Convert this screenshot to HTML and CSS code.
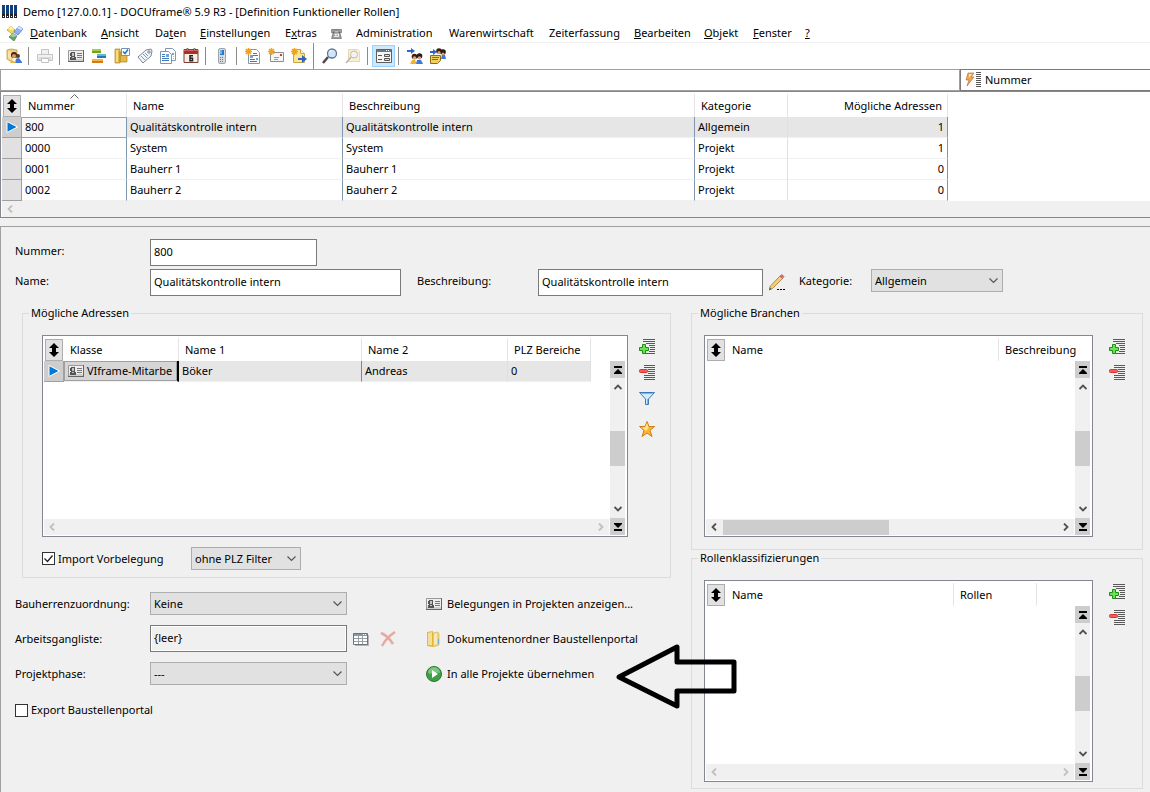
FILE: index.html
```
<!DOCTYPE html>
<html lang="de">
<head>
<meta charset="utf-8" />
<title>DOCUframe - Definition Funktioneller Rollen</title>
<link rel="stylesheet" href="styles.css">
</head>
<body>
<svg class="sprite" aria-hidden="true">
  <symbol id="i-logo" viewBox="0 0 16 16"><path fill="#123f7c" d="M0 1h3v9H0zM4 1h3v9H4zM8 1h3v9H8zM12 1h3v9h-3z"/><path fill="#222" d="M0 10h3v4H0zM4 10h3v4H4zM8 10h3v4H8zM12 10h3v4h-3z"/><path fill="#fff" d="M1 12h1v1H1zM5 12h1v1H5zM9 12h1v1H9zM13 12h1v1h-1z"/></symbol>
  <symbol id="i-cubes" viewBox="0 0 16 16"><path fill="#f1dc62" stroke="#a58a27" stroke-width=".6" d="M4 1l4 4-3 4-5-4z"/><path fill="#fff3a6" d="M4 1l3 3-3 1-3-1z"/><path fill="#8eb2f5" stroke="#3d63b3" stroke-width=".6" d="M12 1l4 3-5 6-4-3z"/><path fill="#d4e2ff" d="M12 1l4 3-2 1-4-2z"/><path fill="#6ba06a" stroke="#3c6f43" stroke-width=".6" d="M6 8l4 3-3 5-5-4z"/><path fill="#a7cda3" d="M6 8l4 3-4 1-3-1z"/></symbol>
  <symbol id="i-phone" viewBox="0 0 16 16"><path fill="#a9a29c" stroke="#5b5753" stroke-width=".8" d="M2 3h12v4h-3V5H5v2H2zM4 7h8l2 7H2z"/><path fill="#fff" d="M5 8h6v4H5z"/><path stroke="#755" stroke-dasharray="1 1" d="M5 8.500h6M5 10.500h6"/></symbol>
  <symbol id="i-user" viewBox="0 0 16 16"><path fill="#efd07c" stroke="#b98c32" stroke-width=".7" d="M1 2l4-1 6 1v11H4l-3-2z"/><path fill="#f7e4a6" d="M2 3l3 1v8l-3-2z"/><circle cx="8" cy="7" r="3" fill="#3b2418"/><circle cx="12" cy="8" r="2" fill="#5a3a28"/><circle cx="8" cy="8" r="2" fill="#dd9a6e"/><path fill="#f4f4f4" d="M5 14l2-4h3l2 4z"/><path fill="#4079dc" d="M9 15l1-4 3-1 3 4v1z"/><path fill="#e6b53b" d="M4 15l2-3 4 3z"/></symbol>
  <symbol id="i-printer" viewBox="0 0 16 16"><path fill="#f1f1f1" stroke="#c4c4c4" d="M4.500 1.500h7v5h-7zM.5 6.500h15v6H.5z"/><path fill="#dadada" d="M2 9h12v3H2z"/><path fill="#fff" stroke="#c4c4c4" d="M4.500 10.500h7v4h-7z"/></symbol>
  <symbol id="i-card" viewBox="0 0 16 16"><path fill="#ededed" stroke="#9a9a9a" d="M.5 2.500h15v11H.5z"/><path stroke="#666" d="M0 13.500h16M15.500 2v12"/><path fill="#999" d="M1 11h14v2H1z" opacity=".35"/><path fill="#555" d="M3 4h4v1H3zM2 5h2v3H2zM6 5h1v3H6zM3 8h4v1H3zM2 9h6v3H2z"/><path fill="#c4c4c4" d="M4 5h2v3H4zM4 9h2v1H4z"/><path stroke="#777" d="M9 5.500h5M9 7.500h5M9 9.500h5"/></symbol>
  <symbol id="i-gantt" viewBox="0 0 16 16"><path fill="#6fa51c" d="M1 1h9v4H1z"/><path fill="#a5cf48" d="M1 1h9v2H1z"/><path fill="#2478ae" d="M6 6h9v4H6z"/><path fill="#67b2da" d="M6 6h9v2H6z"/><path fill="#d87916" d="M1 11h11v4H1z"/><path fill="#f3b14e" d="M1 11h11v2H1z"/></symbol>
  <symbol id="i-foldercheck" viewBox="0 0 16 16"><path fill="#e5b944" stroke="#b0882a" stroke-width=".7" d="M1 1h5v14H1zM6 4h7v10H6z"/><path fill="#f6dc89" d="M2 2h2v12H2z"/><path fill="#fff" stroke="#7294ba" d="M7.500.5h8v7h-8z"/><path fill="none" stroke="#2b6fc2" stroke-width="1.500" d="M9 3.500l2 2 3-4"/></symbol>
  <symbol id="i-tag" viewBox="0 0 16 16"><path fill="#f2f6fa" stroke="#7a8796" d="M1 9l8-7 5-1 1 2-1 5-8 7z"/><circle cx="12" cy="4" r="1.200" fill="#fff" stroke="#6b7f96"/><path stroke="#7c97b7" d="M4 8l4 4M6 6l4 4M8 5l3 3"/></symbol>
  <symbol id="i-docs" viewBox="0 0 16 16"><path fill="#fff" stroke="#7e96b5" d="M5.500.5h7l3 3v9h-10z"/><path fill="#fff" stroke="#7e96b5" d="M.5 3.500h8l3 3v9H.5z"/><path stroke="#4276b8" d="M2 6.500h3M2 8.500h3M2 10.500h7M2 12.500h7"/><path fill="#6fa3d8" d="M6 6h3v3H6zM12 5h2v2h-2z"/><path stroke="#9bb" d="M13 8.500h1M13 10.500h1"/></symbol>
  <symbol id="i-calendar" viewBox="0 0 16 16"><path fill="#f5eee4" stroke="#7a3f35" d="M1 1.500h14v13H1z"/><path fill="#b52a24" d="M1 1h14v5H1z"/><path fill="#e06a5f" d="M1 2h14v1H1z"/><path fill="#ddd" stroke="#444" stroke-width=".6" d="M4 0h1v3H4zM11 0h1v3h-1z"/><path fill="none" stroke="#222" stroke-width="1.500" d="M10 7.700H7v5h2.500v-2.500H7"/></symbol>
  <symbol id="i-mobile" viewBox="0 0 16 16"><rect x="4.500" y=".5" width="7" height="15" rx="1.500" fill="#d7dade" stroke="#9fa5ad"/><path fill="#2878c8" d="M6 2h4v5H6z"/><path fill="#76b5ec" d="M6 2h2v4H6z"/><path stroke="#777" stroke-dasharray="1 1" d="M6 9.500h4M6 11.500h4M6 13.500h4"/></symbol>
  <symbol id="i-newdoc" viewBox="0 0 16 16"><path fill="#fff" stroke="#7e96b5" d="M3.500 1.500h8l3 3v11h-11z"/><path stroke="#4276b8" d="M8 5.500h4M8 7.500h5M5 11.500h5M5 13.500h7"/><path fill="#6fa3d8" d="M5 7h3v3H5zM11 10h2v2h-2z"/><path stroke="#f0a21d" stroke-width="1.500" d="M3.500 0v7M0 3.500h7M1 1l5 5M6 1L1 6"/></symbol>
  <symbol id="i-newmail" viewBox="0 0 16 16"><path fill="#f6f6f6" stroke="#8d8d8d" d="M2.500 4.500h13v9h-13z"/><path fill="#d03a2b" d="M12 6h2v2h-2z"/><path stroke="#999" d="M6 9.500h5M6 11.500h4"/><path stroke="#f0a21d" stroke-width="1.500" d="M3.500 0v7M0 3.500h7M1 1l5 5M6 1L1 6"/></symbol>
  <symbol id="i-newnote" viewBox="0 0 16 16"><path fill="#fae691" stroke="#c8a643" d="M2.500 1.500h7l4 4v9h-11z"/><path fill="#fff6cf" stroke="#c8a643" d="M9.500 1.500v4h4"/><path fill="#2d62c9" d="M7 10h4V7l5 4-5 4v-3H7z"/><path stroke="#f0a21d" stroke-width="1.500" d="M3.500 0v7M0 3.500h7M1 1l5 5M6 1L1 6"/></symbol>
  <symbol id="i-search" viewBox="0 0 16 16"><path stroke="#4b4b4b" stroke-width="2.500" d="M6 9L1 15"/><circle cx="10" cy="5.500" r="4.500" fill="#cfe6fa" stroke="#5d7893" stroke-width="1.300"/><path fill="#fff" d="M7 5c0-2 2-3 4-3-1 1-3 1-4 3z"/></symbol>
  <symbol id="i-searchdoc" viewBox="0 0 16 16"><path fill="#fbefcf" stroke="#e9d8ad" d="M3.500 1.500h9l2 2v10h-11z"/><circle cx="9" cy="6.500" r="3.500" fill="#f0f2f5" stroke="#bcbcbc"/><path stroke="#bdb5a5" stroke-width="1.500" d="M6 9l-5 6"/></symbol>
  <symbol id="i-form" viewBox="0 0 16 16"><path fill="#f7f7f7" stroke="#5f5f5f" d="M.5 1.500h15v13H.5z"/><path fill="#777" d="M1 2h14v2H1z"/><path fill="#fff" d="M10 2h1v1h-1zM12 2h1v1h-1z"/><path stroke="#555" d="M2 7.500h4M2 11.500h4"/><path fill="#f3e585" stroke="#555" d="M8.500 6.500h5v2h-5zM8.500 10.500h5v2h-5z"/></symbol>
  <symbol id="i-people" viewBox="0 0 16 16"><path fill="#2d66d0" d="M0 2h4V0l4 3-4 3V4H0z"/><circle cx="7.500" cy="8.500" r="2.800" fill="#3a2116"/><circle cx="12.500" cy="8" r="2.800" fill="#2a1a13"/><circle cx="7.500" cy="10" r="1.700" fill="#e0a07a"/><circle cx="12.500" cy="10" r="1.700" fill="#e0a07a"/><path fill="#edb536" d="M3 16l2-4h3l2 4z"/><path fill="#3e78da" d="M9 16l1-4h4l2 4z"/></symbol>
  <symbol id="i-peoplenote" viewBox="0 0 16 16"><path fill="#2d66d0" d="M0 3h3V1l4 3-4 3V5H0z"/><circle cx="9" cy="3" r="2.800" fill="#3a2116"/><circle cx="13" cy="4" r="2.800" fill="#2a1a13"/><circle cx="9" cy="4.500" r="1.500" fill="#e0a07a"/><circle cx="13" cy="6" r="1.500" fill="#e0a07a"/><path fill="#3e78da" d="M11 11l1-4h3l1 4z"/><path fill="#f0cf61" stroke="#8e6c1c" d="M.5 7.500h10v5l-3 3h-7z"/><path stroke="#8e6c1c" d="M2 9.500h7M2 11.500h6"/></symbol>
  <symbol id="i-flash" viewBox="0 0 16 16"><path fill="#f3a44c" stroke="#a4663a" stroke-width=".6" d="M3 1h6L6 5h3l-7 9 2-6H1z"/><path fill="#ffe3a8" d="M4 2h3L4 6z"/><path stroke="#555" d="M11 .5h5M11 2.500h5M11 4.500h5M11 6.500h5M11 8.500h5M11 10.500h5M11 12.500h5M11 14.500h5"/></symbol>
  <symbol id="i-updown" viewBox="0 0 10 14"><path d="M5 0l5 5H7v4h3l-5 5-5-5h3V5H0z"/></symbol>
  <symbol id="i-current" viewBox="0 0 12 12"><path fill="#0078d7" stroke="#fff" d="M1 .5L11.500 6 1 11.500z"/></symbol>
  <symbol id="i-left" viewBox="0 0 8 8"><path fill="none" stroke="currentColor" stroke-width="1.800" d="M6 .5L2.500 4 6 7.500"/></symbol>
  <symbol id="i-right" viewBox="0 0 8 8"><path fill="none" stroke="currentColor" stroke-width="1.800" d="M2 .5L5.500 4 2 7.500"/></symbol>
  <symbol id="i-up" viewBox="0 0 8 8"><path fill="none" stroke="currentColor" stroke-width="1.800" d="M.5 6L4 2.500 7.500 6"/></symbol>
  <symbol id="i-down" viewBox="0 0 8 8"><path fill="none" stroke="currentColor" stroke-width="1.800" d="M.5 2L4 5.500 7.500 2"/></symbol>
  <symbol id="i-first" viewBox="0 0 8 8"><path d="M0 0h8v2H0zM4 3l4 4v1H0V7z"/></symbol>
  <symbol id="i-last" viewBox="0 0 8 8"><path d="M0 6h8v2H0zM4 5L0 1V0h8v1z"/></symbol>
  <symbol id="i-add" viewBox="0 0 18 18"><path stroke="#5a5a5a" d="M5 1.500h12M5 3.500h12M8 5.500h9M11 7.500h6M12 9.500h5M12 11.500h5M11 13.500h6M5 15.500h12"/><path fill="#6fe04f" stroke="#169016" d="M4.500 6.500h3v3h3v3h-3v3h-3v-3h-3v-3h3z"/></symbol>
  <symbol id="i-remove" viewBox="0 0 18 18"><path stroke="#5a5a5a" d="M6 1.500h11M6 3.500h11M10 5.500h7M10 7.500h7M10 9.500h7M6 11.500h11M6 13.500h11M6 15.500h11"/><rect x="1.500" y="5.500" width="8" height="3" rx="1" fill="#f65a5a" stroke="#dc3030"/></symbol>
  <symbol id="i-filter" viewBox="0 0 18 18"><path fill="#d4ebfb" stroke="#3d79b8" d="M1.500 2.500h15l-6 6.500v5.500h-3V9z"/><path fill="#7db4e0" d="M3 3h12l-1 1H4zM9 9h1v5H9z"/></symbol>
  <symbol id="i-star" viewBox="0 0 18 18"><path fill="#fdb62a" stroke="#cf7a24" d="M9 1.500l2 5h5.500l-4.500 4 2 6-5-3.500L4 16.500l2-6-4.500-4H7z"/><path fill="#ffe98c" d="M9 3l1.500 4.500L8 11 4 7.500h3z"/></symbol>
  <symbol id="i-pencil" viewBox="0 0 18 18"><path fill="#f3ce73" stroke="#9c7434" stroke-width=".8" d="M2 12.500L12 2l2.500 2.500L4.500 14.500l-3 1.500z"/><path fill="#d9717a" stroke="#a1545c" stroke-width=".6" d="M12 2l2-1.500L16 2.500 14.500 4.500z"/><path fill="#555" d="M1 16l1-2.500L3.500 15z"/><path d="M9 15h2v1H9zM12 15h2v1h-2zM15 15h2v1h-2z"/></symbol>
  <symbol id="i-table" viewBox="0 0 16 16"><path fill="#b5b5b5" d="M2 4h14v11H2z"/><path fill="#fff" stroke="#6a737d" d="M.5 2.500h14v11H.5z"/><path fill="#8a97a5" d="M1 3h13v2H1z"/><path fill="#fff" d="M10 3h1v1h-1zM12 3h1v1h-1z"/><path stroke="#98a1aa" d="M1 7.500h13M1 10.500h13M5.500 5v8M9.500 5v8"/></symbol>
  <symbol id="i-cross" viewBox="0 0 16 16"><path fill="none" stroke="#e6aaa2" stroke-width="2.500" d="M1 2c5 2 9 6 12 11M15 1C9 5 5 9 2 15"/></symbol>
  <symbol id="i-folder" viewBox="0 0 16 16"><path fill="#e3b843" d="M1 1l6-1v16l-6-1z"/><path fill="#f5df94" d="M2 2l4-1v13H2z"/><path fill="#f0d070" stroke="#d9b34d" stroke-width=".6" d="M7 2l5-1 1 2v11l-6 2z"/><path fill="#f9e9b4" d="M8 3l3-1v11l-3 1z"/><path fill="#5bb0e6" d="M12 8h1v5h-1z"/></symbol>
  <symbol id="i-play" viewBox="0 0 16 16"><circle cx="8" cy="8" r="7.500" fill="#3fa045" stroke="#2d7432"/><path fill="#7cc77d" d="M2 7a6 6 0 0 1 12 0c-4-2-8 2-12 0z"/><path fill="#fff" d="M6 4l6 4-6 4z"/></symbol>
</svg>

<header class="titlebar">
  <svg class="icon"><use href="#i-logo"/></svg>
  <span>Demo [127.0.0.1] - DOCUframe® 5.9 R3 - [Definition Funktioneller Rollen]</span>
</header>

<nav class="menu">
  <svg class="icon"><use href="#i-cubes"/></svg>
  <a href="#"><u>D</u>atenbank</a>
  <a href="#"><u>A</u>nsicht</a>
  <a href="#">Da<u>t</u>en</a>
  <a href="#"><u>E</u>instellungen</a>
  <a href="#">E<u>x</u>tras</a>
  <a href="#" aria-label="Telefon"><svg class="icon-small"><use href="#i-phone"/></svg></a>
  <a href="#">Administration</a>
  <a href="#">Warenwirtschaft</a>
  <a href="#">Zeiterfassung</a>
  <a href="#"><u>B</u>earbeiten</a>
  <a href="#"><u>O</u>bjekt</a>
  <a href="#"><u>F</u>enster</a>
  <a href="#"><u>?</u></a>
</nav>

<div class="toolbar">
  <button aria-label="Benutzer"><svg class="icon"><use href="#i-user"/></svg></button>
  <span class="sep"></span>
  <button aria-label="Drucken" disabled><svg class="icon"><use href="#i-printer"/></svg></button>
  <span class="sep"></span>
  <button aria-label="Adressen"><svg class="icon"><use href="#i-card"/></svg></button>
  <button aria-label="Projekte"><svg class="icon"><use href="#i-gantt"/></svg></button>
  <button aria-label="Aufgaben"><svg class="icon"><use href="#i-foldercheck"/></svg></button>
  <button aria-label="Artikel"><svg class="icon"><use href="#i-tag"/></svg></button>
  <button aria-label="Dokumente"><svg class="icon"><use href="#i-docs"/></svg></button>
  <button aria-label="Kalender"><svg class="icon"><use href="#i-calendar"/></svg></button>
  <span class="sep"></span>
  <button aria-label="Anrufen"><svg class="icon"><use href="#i-mobile"/></svg></button>
  <span class="sep"></span>
  <button aria-label="Neues Dokument"><svg class="icon"><use href="#i-newdoc"/></svg></button>
  <button aria-label="Neue E-Mail"><svg class="icon"><use href="#i-newmail"/></svg></button>
  <button aria-label="Neue Notiz"><svg class="icon"><use href="#i-newnote"/></svg></button>
  <span class="sep band"></span>
  <button aria-label="Suchen"><svg class="icon"><use href="#i-search"/></svg></button>
  <button aria-label="Treffer anzeigen" disabled><svg class="icon"><use href="#i-searchdoc"/></svg></button>
  <span class="sep"></span>
  <button class="active" aria-label="Formular"><svg class="icon"><use href="#i-form"/></svg></button>
  <span class="sep"></span>
  <button aria-label="Rollen zuordnen"><svg class="icon"><use href="#i-people"/></svg></button>
  <button aria-label="Rollen notieren"><svg class="icon"><use href="#i-peoplenote"/></svg></button>
</div>

<div class="searchbar">
  <input type="text" aria-label="Suche">
  <button><svg class="icon"><use href="#i-flash"/></svg>Nummer</button>
</div>

<section class="list">
  <table class="grid">
    <colgroup><col class="w-sel"><col class="w-nr"><col class="w-name"><col class="w-desc"><col class="w-cat"><col class="w-count"></colgroup>
    <thead>
      <tr>
        <th><button class="sort" aria-label="Sortierung"><svg><use href="#i-updown"/></svg></button></th>
        <th class="sorted">Nummer</th><th>Name</th><th>Beschreibung</th><th>Kategorie</th><th class="num">Mögliche Adressen</th>
      </tr>
    </thead>
    <tbody>
      <tr class="selected"><td class="mark"><svg><use href="#i-current"/></svg></td><td class="focus">800</td><td>Qualitätskontrolle intern</td><td>Qualitätskontrolle intern</td><td class="soft">Allgemein</td><td class="num">1</td></tr>
      <tr><td class="mark"></td><td>0000</td><td>System</td><td>System</td><td class="soft">Projekt</td><td class="num">1</td></tr>
      <tr><td class="mark"></td><td>0001</td><td>Bauherr 1</td><td>Bauherr 1</td><td class="soft">Projekt</td><td class="num">0</td></tr>
      <tr><td class="mark"></td><td>0002</td><td>Bauherr 2</td><td>Bauherr 2</td><td class="soft">Projekt</td><td class="num">0</td></tr>
    </tbody>
  </table>
  <div class="hscroll off"><svg><use href="#i-left"/></svg></div>
</section>

<main class="panel">
  <div class="field-row">
    <label for="nummer">Nummer:</label>
    <input class="w-short" type="text" id="nummer" value="800">
  </div>
  <div class="field-row">
    <label for="name">Name:</label>
    <input class="w-long" type="text" id="name" value="Qualitätskontrolle intern">
    <label class="label-desc" for="beschreibung">Beschreibung:</label>
    <input class="w-mid" type="text" id="beschreibung" value="Qualitätskontrolle intern">
    <button class="tool edit" aria-label="Beschreibung bearbeiten"><svg><use href="#i-pencil"/></svg></button>
    <label class="label-cat" for="kategorie">Kategorie:</label>
    <select class="w-select" id="kategorie"><option>Allgemein</option></select>
  </div>

  <div class="columns">
    <div class="col-left">
      <fieldset class="addresses">
        <legend>Mögliche Adressen</legend>
        <div class="box-row">
          <div class="box">
            <table class="grid">
              <colgroup><col class="w-sel"><col class="w-class"><col class="w-name1"><col class="w-name2"><col class="w-plz"></colgroup>
              <thead><tr><th><button class="sort" aria-label="Sortierung"><svg><use href="#i-updown"/></svg></button></th><th>Klasse</th><th>Name 1</th><th>Name 2</th><th>PLZ Bereiche</th></tr></thead>
              <tbody><tr class="selected"><td class="mark"><svg><use href="#i-current"/></svg></td><td class="current"><span><svg class="icon"><use href="#i-card"/></svg>VIframe-Mitarbe</span></td><td class="dark">Böker</td><td class="soft">Andreas</td><td class="soft">0</td></tr></tbody>
            </table>
            <div class="vscroll"><span class="jump"><svg><use href="#i-first"/></svg></span><svg><use href="#i-up"/></svg><span class="thumb"></span><svg><use href="#i-down"/></svg><span class="jump"><svg><use href="#i-last"/></svg></span></div>
            <div class="hscroll off"><svg><use href="#i-left"/></svg><svg><use href="#i-right"/></svg></div>
          </div>
          <div class="tools">
            <div class="tool-group">
              <button class="tool" aria-label="Adresse hinzufügen"><svg><use href="#i-add"/></svg></button>
              <button class="tool" aria-label="Adresse entfernen"><svg><use href="#i-remove"/></svg></button>
              <button class="tool" aria-label="Filter"><svg><use href="#i-filter"/></svg></button>
            </div>
            <div class="tool-group">
              <button class="tool" aria-label="Favorit"><svg><use href="#i-star"/></svg></button>
            </div>
          </div>
        </div>
        <div class="import-row">
          <label class="check"><input type="checkbox" checked>Import Vorbelegung</label>
          <select aria-label="PLZ Filter"><option>ohne PLZ Filter</option></select>
        </div>
      </fieldset>

      <div class="settings">
        <label for="bauherr">Bauherrenzuordnung:</label>
        <select id="bauherr"><option>Keine</option></select>
        <span></span>
        <button class="action"><svg class="icon"><use href="#i-card"/></svg>Belegungen in Projekten anzeigen...</button>

        <label for="arbeitsgang">Arbeitsgangliste:</label>
        <input class="readonly" type="text" id="arbeitsgang" value="{leer}" readonly>
        <span class="field-tools">
          <button class="tool" aria-label="Liste auswählen"><svg class="icon"><use href="#i-table"/></svg></button>
          <button class="tool" aria-label="Liste leeren" disabled><svg class="icon"><use href="#i-cross"/></svg></button>
        </span>
        <button class="action"><svg class="icon"><use href="#i-folder"/></svg>Dokumentenordner Baustellenportal</button>

        <label for="phase">Projektphase:</label>
        <select id="phase"><option>---</option></select>
        <span></span>
        <button class="action"><svg class="icon"><use href="#i-play"/></svg>In alle Projekte übernehmen</button>
      </div>
      <label class="check export"><input type="checkbox">Export Baustellenportal</label>
    </div>

    <div class="col-right">
      <fieldset>
        <legend>Mögliche Branchen</legend>
        <div class="box-row">
          <div class="box">
            <table class="grid wide">
              <colgroup><col class="w-sel"><col><col class="w-branch"></colgroup>
              <thead><tr><th><button class="sort" aria-label="Sortierung"><svg><use href="#i-updown"/></svg></button></th><th>Name</th><th class="last">Beschreibung</th></tr></thead>
            </table>
            <div class="vscroll"><span class="jump"><svg><use href="#i-first"/></svg></span><svg><use href="#i-up"/></svg><span class="thumb"></span><svg><use href="#i-down"/></svg><span class="jump"><svg><use href="#i-last"/></svg></span></div>
            <div class="hscroll"><svg><use href="#i-left"/></svg><span class="thumb"></span><svg><use href="#i-right"/></svg></div>
          </div>
          <div class="tools">
            <div class="tool-group">
              <button class="tool" aria-label="Branche hinzufügen"><svg><use href="#i-add"/></svg></button>
              <button class="tool" aria-label="Branche entfernen"><svg><use href="#i-remove"/></svg></button>
            </div>
          </div>
        </div>
      </fieldset>
      <fieldset class="roles">
        <legend>Rollenklassifizierungen</legend>
        <div class="box-row">
          <div class="box">
            <table class="grid wide">
              <colgroup><col class="w-sel"><col><col class="w-roles"><col class="w-rest"></colgroup>
              <thead><tr><th><button class="sort" aria-label="Sortierung"><svg><use href="#i-updown"/></svg></button></th><th>Name</th><th>Rollen</th><th class="last"></th></tr></thead>
            </table>
            <div class="vscroll"><span class="jump"><svg><use href="#i-first"/></svg></span><svg><use href="#i-up"/></svg><span class="thumb"></span><svg><use href="#i-down"/></svg><span class="jump"><svg><use href="#i-last"/></svg></span></div>
            <div class="hscroll off"><svg><use href="#i-left"/></svg><svg><use href="#i-right"/></svg></div>
          </div>
          <div class="tools">
            <div class="tool-group">
              <button class="tool" aria-label="Rolle hinzufügen"><svg><use href="#i-add"/></svg></button>
              <button class="tool" aria-label="Rolle entfernen"><svg><use href="#i-remove"/></svg></button>
            </div>
          </div>
        </div>
      </fieldset>
    </div>
  </div>

  <!-- Hinweispfeil auf "In alle Projekte übernehmen" -->
  <svg class="pointer" viewBox="0 0 122 66"><path fill="none" stroke="#000" stroke-width="5" stroke-linejoin="round" d="M4 33L62 3v15h57v29H62v15z"/></svg>
</main>
</body>
</html>
```

FILE: styles.css
```
* {
  box-sizing: border-box;
}
body {
  display: flex;
  flex-direction: column;
  min-height: 100vh;
  margin: 0;
  background: #f0f0f0;
  color: #000;
  font: 11px/16px "Noto Sans", "Open Sans", sans-serif;
}
button, input, select {
  margin: 0;
  padding: 0;
  border: 0;
  border-radius: 0;
  background: none;
  color: inherit;
  font: inherit;
}
svg {
  display: block;
  flex: none;
}
.sprite {
  position: absolute;
  width: 0;
  height: 0;
}
.icon {
  width: 16px;
  height: 16px;
}
.icon-small {
  width: 13px;
  height: 13px;
}

/* title, menu, toolbar */
.titlebar {
  display: flex;
  align-items: center;
  gap: 5px;
  height: 24px;
  padding-left: 2px;
  background: #fff;
}
.menu {
  display: grid;
  grid-template-columns: 23px 71px 54px 45px 85px 45px 26px 93px 100px 85px 70px 49px 52px auto;
  align-items: center;
  height: 18px;
  padding-left: 7px;
  background: #fff;
}
.menu a {
  color: inherit;
  text-decoration: none;
}
.toolbar {
  display: flex;
  align-items: center;
  height: 27px;
  padding-left: 2px;
  border-top: 1px solid #f0f0f0;
  background: #fff;
}
.toolbar button {
  display: grid;
  place-items: center;
  width: 23px;
  height: 22px;
}
.toolbar .active {
  border: 1px solid #99d1ff;
  background: #cce8ff;
}
.sep {
  width: 8px;
  height: 18px;
  background: linear-gradient(#8c8c8c, #8c8c8c) 3px 0 / 1px 100% no-repeat;
}
.sep.band {
  height: 100%;
}

.searchbar {
  display: flex;
  height: 22px;
}
.searchbar input {
  flex: 1;
  border: 1px solid #a0a0a0;
  background: #fff;
}
.searchbar button {
  display: flex;
  flex: none;
  align-items: center;
  gap: 4px;
  width: 190px;
  padding-left: 4px;
  border: 1px solid #7a7a7a;
  border-right: 0;
  background: #fff;
}

/* grids */
.list {
  padding: 2px 0 0 1px;
  border: 1px solid #828790;
  border-right: 0;
  background: #fff;
}
.grid {
  width: 0;
  border-spacing: 0;
  table-layout: fixed;
}
.grid.wide {
  width: 100%;
}
.w-sel { width: 20px; }
.w-nr { width: 105px; }
.w-name { width: 216px; }
.w-desc { width: 352px; }
.w-cat { width: 93px; }
.w-count { width: 160px; }
.w-class { width: 115px; }
.w-name1 { width: 183px; }
.w-name2 { width: 146px; }
.w-plz { width: 83px; }
.w-branch { width: 91px; }
.w-roles { width: 83px; }
.w-rest { width: 53px; }
.grid th {
  height: 23px;
  padding: 0 5px 0 6px;
  border-right: 1px solid #e5e5e5;
  font-weight: normal;
  text-align: left;
  white-space: nowrap;
}
.grid th:first-child {
  padding: 0 0 0 1px;
  border-right: 0;
}
.grid th.last {
  border-right: 0;
}
.grid td {
  height: 21px;
  padding: 0 3px;
  border-right: 1px solid #8096b0;
  border-bottom: 1px solid #f0f0f0;
  white-space: nowrap;
}
.grid td.soft {
  border-right-color: #e0e0e0;
}
.grid td.dark {
  border-right-color: #828790;
}
.grid .num {
  text-align: right;
}
.grid .sorted {
  background: url("data:image/svg+xml,%3Csvg xmlns='http://www.w3.org/2000/svg' width='9' height='5'%3E%3Cpath fill='none' stroke='%23666' d='M.5 4.500l4-4 4 4'/%3E%3C/svg%3E") 48px 0 no-repeat;
}
.grid .selected td {
  background: #e6e6e6;
}
.grid .mark {
  padding: 0 0 0 4px;
  border-right: 1px solid #a0a0a0;
  border-bottom-color: #a0a0a0;
  background: #e1e1e1;
}
.grid .selected .mark {
  background: #cdcdcd;
}
.mark svg {
  width: 12px;
  height: 12px;
}
.grid .selected .focus {
  border-bottom-color: #a0a0a0;
  background: #f8f8f8;
  box-shadow: inset 0 1px #a0a0a0;
}
.grid .selected .current {
  padding: 0;
  border-right: 2px solid #000;
}
.current span {
  display: flex;
  align-items: center;
  gap: 3px;
  height: 20px;
  padding-left: 3px;
  overflow: hidden;
  border: 1px solid #a0a0a0;
  background: #d6d6d6;
}
.sort {
  display: grid;
  place-items: center;
  width: 18px;
  height: 22px;
  border: 1px solid #adadad;
  background: #e1e1e1;
}
.sort svg {
  width: 10px;
  height: 14px;
}

/* scrollbars */
.hscroll {
  display: flex;
  align-items: center;
  justify-content: space-between;
  height: 16px;
  padding: 0 4px;
  background: #f0f0f0;
  color: #505050;
}
.hscroll svg, .vscroll svg {
  width: 8px;
  height: 8px;
}
.hscroll.off {
  color: #bfbfbf;
}
.hscroll .thumb {
  width: 46%;
  height: 15px;
  margin-left: 5px;
  margin-right: auto;
  background: #cdcdcd;
}
.vscroll {
  display: flex;
  flex-direction: column;
  align-items: center;
  background: #f0f0f0;
  color: #505050;
}
.vscroll > svg {
  margin: 5px 0;
}
.vscroll .thumb {
  width: 15px;
  height: 35px;
  margin: auto;
  background: #cdcdcd;
}
.jump {
  display: grid;
  place-items: center;
  width: 15px;
  height: 17px;
  background: #cdcdcd;
  color: #000;
}

/* form */
.panel {
  position: relative;
  flex: 1;
  margin-top: 8px;
  padding: 12px 7px 4px 14px;
  border: solid #a0a0a0;
  border-width: 1px 0 0 1px;
}
.field-row {
  display: flex;
  margin-bottom: 3px;
}
.field-row label {
  flex: none;
  width: 135px;
  padding-top: 4px;
}
.field-row .label-desc {
  width: 137px;
  padding-left: 16px;
}
.field-row .label-cat {
  width: 72px;
}
.panel input[type=text] {
  height: 27px;
  padding: 0 3px 2px;
  border: 1px solid #7a7a7a;
  background: #fff;
}
.w-short { width: 167px; }
.w-long { width: 251px; }
.w-mid { width: 225px; }
select {
  height: 23px;
  padding: 0 20px 0 3px;
  border: 1px solid #adadad;
  background: #e1e1e1 url("data:image/svg+xml,%3Csvg xmlns='http://www.w3.org/2000/svg' width='9' height='6'%3E%3Cpath fill='none' stroke='%23555' stroke-width='1.200' d='M.5.5l4 4 4-4'/%3E%3C/svg%3E") right 4px center no-repeat;
  appearance: none;
}
.panel select.w-select {
  width: 132px;
}
.tool {
  display: grid;
  place-items: center;
  width: 18px;
  height: 18px;
}
.tool svg:not(.icon) {
  width: 18px;
  height: 18px;
}
.edit {
  margin: 5px 13px 0 5px;
}
.columns {
  display: grid;
  grid-template-columns: 656fr 452fr;
  gap: 20px;
  margin-top: 9px;
}
fieldset {
  min-width: 0;
  margin: 0;
  padding: 14px 6px 12px 12px;
  border: 1px solid #dcdcdc;
}
legend {
  margin-left: -6px;
  padding: 0 2px;
}
.addresses {
  margin-left: 7px;
  padding: 14px 4px 7px 19px;
}
.addresses legend {
  margin-left: -13px;
}
.roles {
  padding-bottom: 6px;
}
.box-row {
  display: flex;
}
.box {
  display: grid;
  flex: 1;
  grid-template: 23px 158px 16px / minmax(0, 1fr) 15px;
  column-gap: 1px;
  min-width: 0;
  padding: 2px 2px 1px 1px;
  border: 1px solid #828790;
  background: #fff;
}
.box .grid {
  grid-area: 1 / 1 / 3 / 3;
  align-self: start;
}
.box .vscroll {
  grid-area: 2 / 2 / 4 / 3;
}
.box .hscroll {
  grid-area: 3 / 1 / 4 / 2;
}
.tools {
  display: flex;
  flex-direction: column;
  align-items: center;
  gap: 12px;
  width: 38px;
  padding-top: 3px;
}
.col-right .tools {
  margin-left: 5px;
}
.tool-group {
  display: grid;
  gap: 8px;
}
.check {
  display: flex;
  align-items: center;
  gap: 3px;
}
.check input {
  width: 13px;
  height: 13px;
  border: 1px solid #333;
  background: #fff;
  appearance: none;
}
.check input:checked {
  background: #fff url("data:image/svg+xml,%3Csvg xmlns='http://www.w3.org/2000/svg' width='11' height='11'%3E%3Cpath fill='none' stroke='%23222' stroke-width='1.300' d='M1.500 5.500l3 3 5-6'/%3E%3C/svg%3E");
}
.import-row {
  display: grid;
  grid-template-columns: 149px 110px;
  margin-top: 10px;
}
.settings {
  display: grid;
  grid-template-columns: 135px 197px 79px 1fr;
  row-gap: 10px;
  align-items: center;
  margin-top: 14px;
}
.panel input.readonly {
  background: #f0f0f0;
  box-shadow: inset 0 0 0 1px #fff;
}
.field-tools {
  display: flex;
  gap: 9px;
  padding-left: 5px;
}
.action {
  display: flex;
  align-items: center;
  gap: 5px;
  text-align: left;
  white-space: nowrap;
}
.export {
  margin-top: 17px;
}
.pointer {
  position: absolute;
  top: 417px;
  left: 614px;
  width: 122px;
  height: 66px;
}
```
